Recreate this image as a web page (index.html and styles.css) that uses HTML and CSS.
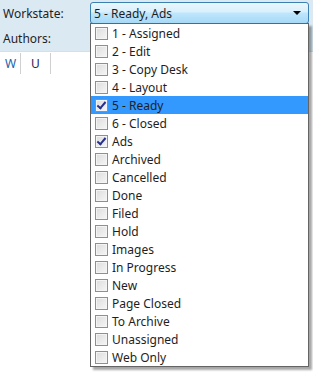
FILE: index.html
```html
<!DOCTYPE html>
<html lang="en">

<head>
    <meta charset="UTF-8">
    <title>Workstate Filter</title>
    <link rel="stylesheet" href="styles.css">
</head>

<body>

    <!-- Filter panel -->
    <div class="filters">
        <div class="filter-row">
            <span class="filter-label">Workstate:</span>
            <div class="combo">
                <span class="combo-text">5 - Ready, Ads</span>
                <span class="combo-arrow"></span>
            </div>
        </div>
        <div class="filter-row">
            <span class="filter-label">Authors:</span>
        </div>
    </div>

    <!-- Grid header -->
    <div class="grid-header">
        <div class="col col-w">W</div>
        <div class="col col-u">U</div>
    </div>

    <!-- Dropdown list -->
    <div class="dropdown">
        <div class="item"><span class="box"></span>1 - Assigned</div>
        <div class="item"><span class="box"></span>2 - Edit</div>
        <div class="item"><span class="box"></span>3 - Copy Desk</div>
        <div class="item"><span class="box"></span>4 - Layout</div>
        <div class="item selected"><span class="box checked"></span>5 - Ready</div>
        <div class="item"><span class="box"></span>6 - Closed</div>
        <div class="item"><span class="box checked"></span>Ads</div>
        <div class="item"><span class="box"></span>Archived</div>
        <div class="item"><span class="box"></span>Cancelled</div>
        <div class="item"><span class="box"></span>Done</div>
        <div class="item"><span class="box"></span>Filed</div>
        <div class="item"><span class="box"></span>Hold</div>
        <div class="item"><span class="box"></span>Images</div>
        <div class="item"><span class="box"></span>In Progress</div>
        <div class="item"><span class="box"></span>New</div>
        <div class="item"><span class="box"></span>Page Closed</div>
        <div class="item"><span class="box"></span>To Archive</div>
        <div class="item"><span class="box"></span>Unassigned</div>
        <div class="item"><span class="box"></span>Web Only</div>
    </div>

</body>

</html>
```

FILE: styles.css
```css
body {
    margin: 0;
    width: 313px;
    height: 372px;
    position: relative;
    overflow: hidden;
    background-color: #ffffff;
    font-family: "Noto Sans", "DejaVu Sans", sans-serif;
    font-size: 12px;
    color: #1e1e1e;
}

/* Filter panel */
.filters {
    background-color: #dbe9f3;
    height: 51px;
    padding-top: 2px;
    box-sizing: border-box;
}

.filter-row {
    display: flex;
    align-items: center;
    height: 22px;
    margin-bottom: 3px;
}

.filter-label {
    width: 90px;
    padding-left: 3px;
    box-sizing: border-box;
}

.combo {
    flex: 1;
    margin-right: 4px;
    height: 22px;
    box-sizing: border-box;
    border: 1px solid #3c7fb1;
    border-radius: 3px;
    background: linear-gradient(#eaf6fd, #d9f0fc 45%, #bee6fd 50%, #a7d9f5);
    display: flex;
    align-items: center;
    justify-content: space-between;
    padding: 0 7px 0 3px;
}

.combo-arrow {
    width: 0;
    height: 0;
    border-left: 4px solid transparent;
    border-right: 4px solid transparent;
    border-top: 4px solid #000000;
}

/* Grid header */
.grid-header {
    display: flex;
    border-top: 1px solid #d5dfe5;
    height: 21px;
    padding-top: 1px;
}

.col {
    display: flex;
    align-items: center;
    padding-left: 5px;
    border-right: 1px solid #d0d0d0;
    box-sizing: border-box;
}

.col-w { width: 21px; color: #1c5fa8; }
.col-u { width: 30px; justify-content: center; padding-left: 0; color: #1e1e5a; }

/* Dropdown list */
.dropdown {
    position: absolute;
    top: 23px;
    left: 90px;
    width: 219px;
    box-sizing: border-box;
    background-color: #ffffff;
    border: 1px solid #646464;
    box-shadow: 3px 3px 2px rgba(0, 0, 0, 0.35);
}

.item {
    display: flex;
    align-items: center;
    height: 18px;
    padding-left: 4px;
    color: #1e1e1e;
}

.item.selected {
    background-color: #3399ff;
}

.box {
    width: 13px;
    height: 13px;
    box-sizing: border-box;
    border: 1px solid #8e8f8f;
    background: linear-gradient(135deg, #dcdcdc, #f6f6f6);
    box-shadow: inset 0 0 0 1px #f4f4f4;
    margin-right: 4px;
    position: relative;
}

.box.checked::after {
    content: "";
    position: absolute;
    left: 3px;
    top: 0px;
    width: 3px;
    height: 7px;
    border-right: 2px solid #27308f;
    border-bottom: 2px solid #27308f;
    transform: rotate(40deg);
}
```
